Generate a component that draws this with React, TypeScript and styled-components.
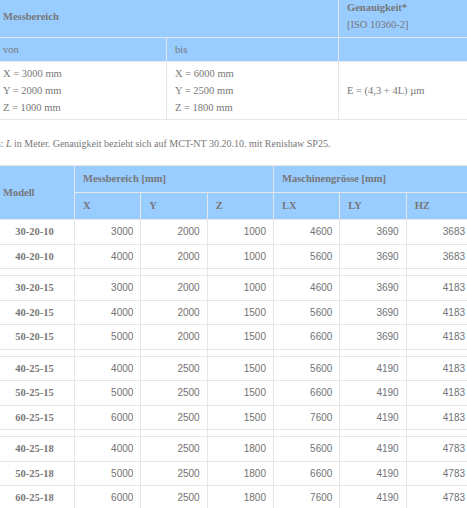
import React from "react";
import styled, { createGlobalStyle } from "styled-components";

const Global = createGlobalStyle`
  html, body { margin: 0; padding: 0; background: #ffffff; overflow: hidden; }
  body { font-family: "Liberation Serif", "Times New Roman", serif; font-size: 10.5px; color: #777777; }
`;

const Page = styled.div`
  margin: -6px 0 0 -6px;
  width: 530px;
`;

const Table = styled.table<{ $width: number }>`
  border-collapse: collapse;
  table-layout: fixed;
  width: ${(p) => p.$width}px;
  font-size: 10.5px;
`;

const HeadCell = styled.th`
  background: #99ccff;
  color: #777777;
  font-weight: bold;
  text-align: left;
  vertical-align: middle;
  padding: 4px 8px;
  line-height: 17px;
  border: 1px solid #e4e6ea;
  font-family: "Liberation Serif", "Times New Roman", serif;
  font-size: 10.5px;
  white-space: nowrap;
`;

const SubHead = styled(HeadCell)`
  font-weight: normal;
  padding: 3px 8px;
`;

const Normal = styled.span`
  font-weight: normal;
`;

const TextCell = styled.td`
  padding: 3px 8px;
  line-height: 17px;
  border: 1px solid #e4e6ea;
  vertical-align: middle;
  white-space: nowrap;
`;

const Note = styled.p`
  margin: 0;
  padding: 15px 0 13px 9.5px;
  line-height: 17px;
  font-size: 10px;
  white-space: nowrap;
  display: flex;
`;

const NotePrefix = styled.span`
  width: 0;
  display: inline-flex;
  justify-content: flex-end;
  white-space: nowrap;
`;

const Em = styled.i``;

const Head2 = styled(HeadCell)`
  padding: 5px 8px;
  line-height: 16px;
`;

const ModelCell = styled.td`
  padding: 4px 8px;
  line-height: 15.5px;
  border: 1px solid #e4e6ea;
  text-align: center;
  font-weight: bold;
  white-space: nowrap;
`;

const NumCell = styled.td`
  padding: 4px 7px 4px 8px;
  line-height: 15.5px;
  border: 1px solid #e4e6ea;
  text-align: right;
  font-family: "Liberation Sans", Arial, sans-serif;
  font-size: 10px;
  color: #727272;
  white-space: nowrap;
`;

const SpacerCell = styled.td`
  padding: 0;
  height: 6px;
  border: 1px solid #e4e6ea;
`;

type Row = [string, number, number, number, number, number, number];

const groups: Row[][] = [
  [
    ["30-20-10", 3000, 2000, 1000, 4600, 3690, 3683],
    ["40-20-10", 4000, 2000, 1000, 5600, 3690, 3683],
  ],
  [
    ["30-20-15", 3000, 2000, 1000, 4600, 3690, 4183],
    ["40-20-15", 4000, 2000, 1500, 5600, 3690, 4183],
    ["50-20-15", 5000, 2000, 1500, 6600, 3690, 4183],
  ],
  [
    ["40-25-15", 4000, 2500, 1500, 5600, 4190, 4183],
    ["50-25-15", 5000, 2500, 1500, 6600, 4190, 4183],
    ["60-25-15", 6000, 2500, 1500, 7600, 4190, 4183],
  ],
  [
    ["40-25-18", 4000, 2500, 1800, 5600, 4190, 4783],
    ["50-25-18", 5000, 2500, 1800, 6600, 4190, 4783],
    ["60-25-18", 6000, 2500, 1800, 7600, 4190, 4783],
  ],
];

export default function App() {
  return (
    <>
      <Global />
      <Page>
        <Table $width={516}>
          <colgroup>
            <col style={{ width: 172 }} />
            <col style={{ width: 172 }} />
            <col style={{ width: 172 }} />
          </colgroup>
          <thead>
            <tr>
              <HeadCell colSpan={2}>Messbereich</HeadCell>
              <HeadCell>
                Genauigkeit*
                <br />
                <Normal>[ISO 10360-2]</Normal>
              </HeadCell>
            </tr>
            <tr>
              <SubHead>von</SubHead>
              <SubHead>bis</SubHead>
              <SubHead />
            </tr>
          </thead>
          <tbody>
            <tr>
              <TextCell>
                X = 3000 mm
                <br />Y = 2000 mm
                <br />Z = 1000 mm
              </TextCell>
              <TextCell>
                X = 6000 mm
                <br />Y = 2500 mm
                <br />Z = 1800 mm
              </TextCell>
              <TextCell>E = (4,3 + 4L) µm</TextCell>
            </tr>
          </tbody>
        </Table>
        <Note>
          <NotePrefix>*Hinweis:</NotePrefix>
          <span>
            &nbsp;<Em>L</Em> in Meter. Genauigkeit bezieht sich auf MCT-NT 30.20.10. mit Renishaw SP25.
          </span>
        </Note>
        <Table $width={478}>
          <colgroup>
            <col style={{ width: 80 }} />
            {[0, 1, 2, 3, 4, 5].map((i) => (
              <col key={i} style={{ width: 66.33 }} />
            ))}
          </colgroup>
          <thead>
            <tr>
              <Head2 rowSpan={2}>Modell</Head2>
              <Head2 colSpan={3}>Messbereich [mm]</Head2>
              <Head2 colSpan={3}>Maschinengrösse [mm]</Head2>
            </tr>
            <tr>
              <Head2>X</Head2>
              <Head2>Y</Head2>
              <Head2>Z</Head2>
              <Head2>LX</Head2>
              <Head2>LY</Head2>
              <Head2>HZ</Head2>
            </tr>
          </thead>
          <tbody>
            {groups.map((g, gi) => (
              <React.Fragment key={gi}>
                {gi > 0 && (
                  <tr>
                    {[0, 1, 2, 3, 4, 5, 6].map((c) => (
                      <SpacerCell key={c} />
                    ))}
                  </tr>
                )}
                {g.map((r) => (
                  <tr key={r[0]}>
                    <ModelCell>{r[0]}</ModelCell>
                    {r.slice(1).map((v, i) => (
                      <NumCell key={i}>{v}</NumCell>
                    ))}
                  </tr>
                ))}
              </React.Fragment>
            ))}
          </tbody>
        </Table>
      </Page>
    </>
  );
}
